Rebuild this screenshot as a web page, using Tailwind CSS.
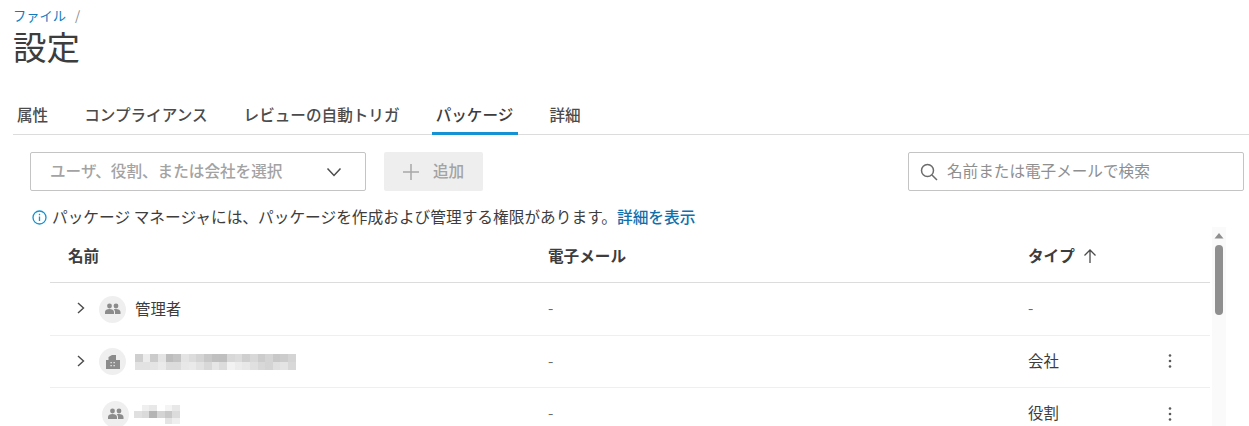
<!DOCTYPE html>
<html lang="ja">
<head>
  <meta charset="UTF-8">
  <title>設定</title>
  <script src="https://cdn.jsdelivr.net/npm/@tailwindcss/browser@4"></script>
</head>
<body class="h-[426px] overflow-hidden bg-white text-[#3d3d3d] font-['Noto_Sans_CJK_JP','Noto_Sans',sans-serif]">
  <!-- Breadcrumb + title -->
  <header class="pl-[13px] pt-[7px]">
    <div class="flex items-center h-[18px] text-[13.25px] leading-[18px]">
      <a href="#" class="text-[#0f7cc0]">ファイル</a>
      <span class="ml-[9px] text-[#8a8a8a]">/</span>
    </div>
    <h1 class="mt-[3px] h-[36px] text-[33.5px] leading-[36px] font-normal">設定</h1>
  </header>

  <!-- Tabs -->
  <nav class="mt-[37px] ml-[13px] h-[34px] flex border-b border-[#dcdcdc] text-[15.6px] leading-[20px] font-medium text-[#4b4b4b]">
    <a href="#" class="px-[4px] pt-[3px] mr-[28px]">属性</a>
    <a href="#" class="px-[4px] pt-[3px] mr-[28px]">コンプライアンス</a>
    <a href="#" class="px-[4px] pt-[3px] mr-[28px]">レビューの自動トリガ</a>
    <a href="#" class="w-[86px] h-[34px] pt-[3px] text-center border-b-[3px] border-[#1492d3] text-[#3d3d3d]">パッケージ</a>
    <a href="#" class="px-[4px] pt-[3px] ml-[28px]">詳細</a>
  </nav>

  <!-- Toolbar -->
  <div class="mt-[17px] ml-[30px] mr-[5px] flex items-center h-[39px]">
    <div class="w-[336px] h-[39px] flex items-center justify-between pl-[19px] pr-[23px] pb-[2px] bg-white border border-[#c4c4c4] rounded-[2px] text-[15.6px] font-medium text-[#a3a3a3]">
      <span>ユーザ、役割、または会社を選択</span>
      <svg class="mt-[2px]" width="16" height="16" viewBox="0 0 16 16" fill="none" stroke="#4b4b4b" stroke-width="1.5"><path d="M1.500 4.500 8 11.500 14.500 4.500"/></svg>
    </div>
    <button class="ml-[18px] w-[99px] h-[39px] flex items-center pl-[18px] pb-[2px] bg-[#eeeeee] rounded-[2px] text-[15.6px] font-medium text-[#a3a3a3]">
      <svg class="mt-[2px]" width="18" height="18" viewBox="0 0 18 18" fill="none" stroke="#a8a8a8" stroke-width="1.5"><path d="M9 1v16M1 9h16"/></svg>
      <span class="ml-[13px]">追加</span>
    </button>
    <div class="ml-auto w-[336px] h-[39px] flex items-center pl-[11px] pb-[2px] bg-white border border-[#c4c4c4] rounded-[2px] text-[15.6px] text-[#8f8f8f]">
      <svg class="mt-[2px]" width="18" height="18" viewBox="0 0 18 18" fill="none" stroke="#6b6b6b" stroke-width="1.5"><circle cx="7.500" cy="7.500" r="6"/><path d="M12 12l5 5"/></svg>
      <span class="ml-[9px]">名前または電子メールで検索</span>
    </div>
  </div>

  <!-- Info line -->
  <div class="mt-[16px] ml-[32px] flex items-center h-[20px] text-[15.7px] leading-[20px] text-[#3d3d3d]">
    <svg width="15" height="15" viewBox="0 0 15 15" fill="none" stroke="#1492d3" stroke-width="1.300"><circle cx="7.500" cy="7.500" r="6.500"/><path d="M7.500 6.500v4.500M7.500 3.800v1.500"/></svg>
    <span class="ml-[5px]">パッケージ マネージャには、パッケージを作成および管理する権限があります。</span>
    <a href="#" class="text-[#0f70ad] font-medium">詳細を表示</a>
  </div>

  <!-- Table + scrollbar -->
  <div class="ml-[50px] flex">
    <div class="w-[1160px]">
      <div class="h-[56px] pt-[3px] grid grid-cols-[480px_480px_1fr] items-center border-b border-[#dcdcdc] text-[15.6px] font-bold text-[#3d3d3d]">
        <div class="pl-[18px]">名前</div>
        <div class="pl-[18px]">電子メール</div>
        <div class="pl-[18px] flex items-center">
          タイプ
          <svg class="ml-[8px]" width="14" height="16" viewBox="0 0 14 16" fill="none" stroke="#4b4b4b" stroke-width="1.300"><path d="M7 15V2M1.500 7.500 7 2l5.500 5.500"/></svg>
        </div>
      </div>

      <div class="h-[53px] grid grid-cols-[480px_480px_1fr] items-center border-b border-[#efefef] text-[15.4px]">
        <div class="flex items-center">
          <svg class="ml-[26px] -mt-[2px]" width="10" height="12" viewBox="0 0 10 12" fill="none" stroke="#4b4b4b" stroke-width="1.400"><path d="M2 1 7.500 6 2 11"/></svg>
          <span class="ml-[13px] w-[27px] h-[27px] rounded-full bg-[#efefef] flex items-center justify-center">
            <svg width="17" height="12" viewBox="0 0 16 12" fill="#8c8c8c"><circle cx="5" cy="3" r="2.400"/><circle cx="11.500" cy="3" r="2.400"/><path d="M0.500 11V9c0-2 2-3 4.500-3s4.500 1 4.500 3v2zM10.500 11V9c0-1.200-.5-2.200-1.400-2.800.7-.2 1.500-.2 2.400-.2 2.400 0 4.500 1 4.500 3v2z"/></svg>
          </span>
          <span class="ml-[9px]">管理者</span>
        </div>
        <div class="pl-[18px] pb-[2px] text-[#6b6b6b]">-</div>
        <div class="pl-[18px] pb-[2px] text-[#6b6b6b]">-</div>
      </div>

      <div class="h-[52px] grid grid-cols-[480px_480px_1fr] items-center border-b border-[#efefef] text-[15.4px]">
        <div class="flex items-center">
          <svg class="ml-[26px] -mt-[2px]" width="10" height="12" viewBox="0 0 10 12" fill="none" stroke="#4b4b4b" stroke-width="1.400"><path d="M2 1 7.500 6 2 11"/></svg>
          <span class="ml-[13px] w-[27px] h-[27px] rounded-full bg-[#efefef] flex items-center justify-center">
            <svg width="14" height="14" viewBox="0 0 14 14" fill="#8c8c8c"><path fill-rule="evenodd" d="M0 14V5h2.500V2L6 0h4v5h4v9zM4.500 7v1.300h1.300V7zM7.500 7v1.300h1.300V7zM4.500 10v1.300h1.300V10zM7.500 10v1.300h1.300V10z"/></svg>
          </span>
          <div id="blur-company" class="ml-[9px] grid grid-cols-[repeat(21,7.670px)] grid-rows-[8px_8px]"></div>
        </div>
        <div class="pl-[18px] pb-[2px] text-[#6b6b6b]">-</div>
        <div class="pl-[18px] flex items-center justify-between pr-[38px]">
          <span class="pb-[2px]">会社</span>
          <svg width="4" height="16" viewBox="0 0 4 16" fill="#5a5a5a"><circle cx="2" cy="2.500" r="1.300"/><circle cx="2" cy="8" r="1.300"/><circle cx="2" cy="13.500" r="1.300"/></svg>
        </div>
      </div>

      <div class="h-[52px] grid grid-cols-[480px_480px_1fr] items-center text-[15.4px]">
        <div class="flex items-center">
          <span class="ml-[52px] w-[27px] h-[27px] rounded-full bg-[#efefef] flex items-center justify-center">
            <svg width="17" height="12" viewBox="0 0 16 12" fill="#8c8c8c"><circle cx="5" cy="3" r="2.400"/><circle cx="11.500" cy="3" r="2.400"/><path d="M0.500 11V9c0-2 2-3 4.500-3s4.500 1 4.500 3v2zM10.500 11V9c0-1.200-.5-2.200-1.400-2.800.7-.2 1.500-.2 2.400-.2 2.400 0 4.500 1 4.500 3v2z"/></svg>
          </span>
          <div id="blur-role" class="ml-[5px] grid grid-cols-[repeat(6,7.670px)] grid-rows-[6px_7px_6px]"></div>
        </div>
        <div class="pl-[18px] pb-[3px] text-[#6b6b6b]">-</div>
        <div class="pl-[18px] flex items-center justify-between pr-[38px]">
          <span class="pb-[3px]">役割</span>
          <svg width="4" height="16" viewBox="0 0 4 16" fill="#5a5a5a"><circle cx="2" cy="2.500" r="1.300"/><circle cx="2" cy="8" r="1.300"/><circle cx="2" cy="13.500" r="1.300"/></svg>
        </div>
      </div>
    </div>

    <!-- Scrollbar -->
    <div class="ml-[2px] w-[14px] h-[200px] bg-[#fafafa] flex flex-col items-center">
      <svg class="mt-[6px]" width="10" height="6" viewBox="0 0 10 6" fill="#8f8f8f"><path d="M5 0l4.500 5.500H.5z"/></svg>
      <div class="mt-[6px] w-[8px] h-[70px] rounded-[4px] bg-[#8f8f8f]"></div>
    </div>
  </div>

  <script>
    // Mosaic cells that stand in for the obscured names
    const companyCells = [
      '#cfcfcf','#ececec','#cbcbcb','#e4e4e4','#bdbdbd','#c4c4c4','#e4e4e4','#dcdcdc','#d4d4d4','#c8c8c8','#c0c0c0','#bfbfbf','#d8d8d8','#dcdcdc','#cfcfcf','#d8d8d8','#cccccc','#d4d4d4','#c8c8c8','#cccccc','#d4d4d4',
      '#e2e2e2','#e2e2e2','#e4e4e4','#eaeaea','#dcdcdc','#dcdcdc','#e8e8e8','#eaeaea','#e2e2e2','#d8d8d8','#e6e6e6','#dcdcdc','#f2f2f2','#ececec','#e8e8e8','#e0e0e0','#d8d8d8','#d4d4d4','#e0e0e0','#e4e4e4','#d8d8d8',
    ];
    const roleCells = [
      '#ffffff','#efefef','#e8e8e8','#ffffff','#f4f4f4','#e8e8e8',
      '#e0e0e0','#dadada','#b4b4b4','#d4d4d4','#c8c8c8','#dcdcdc',
      '#ffffff','#ffffff','#ffffff','#ffffff','#e4e4e4','#efefef',
    ];
    function fillMosaic(id, cells) {
      const box = document.getElementById(id);
      cells.forEach(color => {
        const cell = document.createElement('div');
        cell.style.background = color;
        box.appendChild(cell);
      });
    }
    fillMosaic('blur-company', companyCells);
    fillMosaic('blur-role', roleCells);
  </script>
</body>
</html>
